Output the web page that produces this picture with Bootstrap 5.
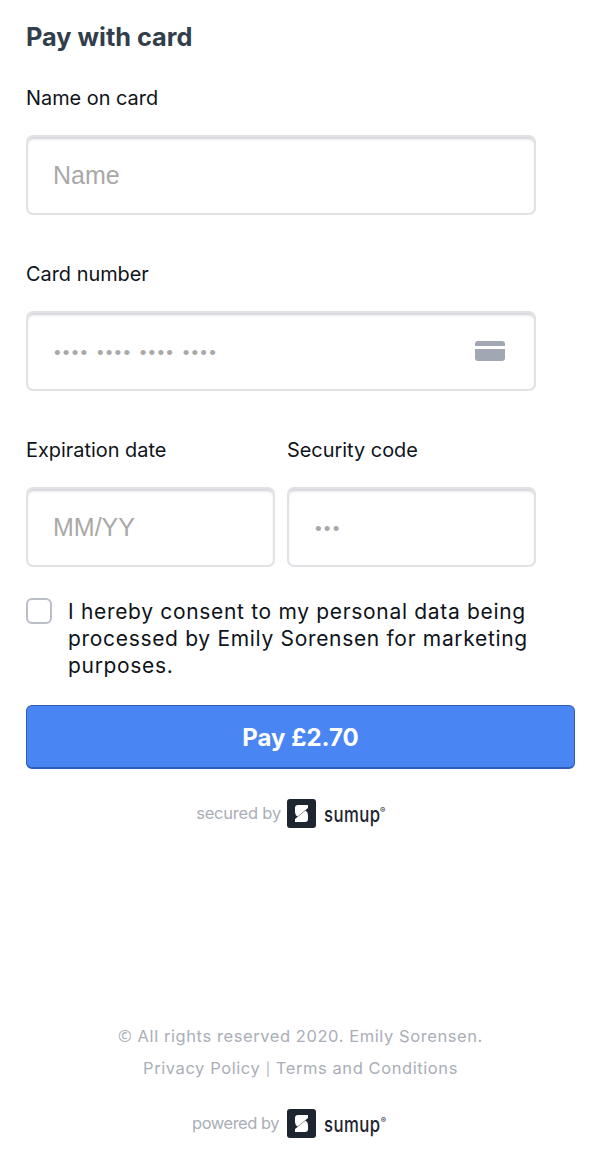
<!DOCTYPE html>
<html lang="en">
<head>
<meta charset="utf-8">
<title>Pay with card</title>
<link href="https://cdn.jsdelivr.net/npm/bootstrap@5.3.0/dist/css/bootstrap.min.css" rel="stylesheet">
<style>
html,body{height:100%}
body{font-family:"Inter","Liberation Sans",sans-serif;color:#0f131a;background:#fff}
.pay-page{height:1150px;padding:21px 25px 0 26px;display:flex;flex-direction:column}
.pay-title{font-size:25.3px;font-weight:700;color:#323e4b;line-height:32px;margin:0 0 32px}
.pay-fields{width:510px}
.field-block{margin-bottom:46px}
.field-block:last-child{margin-bottom:31px}
.field-block .form-label{font-size:19.9px;line-height:26px;margin:0 0 24px;display:block;color:#0f131a}
.field-input-wrap{position:relative}
.pay-input.form-control{height:80px;font-family:"Liberation Sans",sans-serif;font-size:25px;padding:1px 25px 0;border:2px solid #e0e2e6;border-radius:7px;color:#333;box-shadow:inset 0 3px 3px -1px #d0d1d4}
.pay-input.form-control.dots{padding:0 26px 2px}
.pay-input::placeholder{color:#a9a9a9;opacity:1}
.pay-input.dots::placeholder{font-size:19px;letter-spacing:2.2px;color:#a9a9a9}
.card-glyph{position:absolute;right:31px;top:30px;width:30px;height:20px}
.split-gap{--bs-gutter-x:12px}
.consent{display:flex;gap:16px;margin:0 0 26px;padding:0}
.consent .form-check-input{width:26px;height:26px;margin:0;flex:none;border:2px solid #b9bec7;border-radius:6px}
.consent label{font-size:21px;line-height:27px;letter-spacing:.68px;color:#0f131a;width:480px}
.pay-btn.btn{width:549px;height:64px;background:#4a85f4;border:1px solid #2d5db4;border-bottom-width:2px;border-radius:6px;color:#fff;font-size:24px;font-weight:700;padding:2px 0 0}
.brand-line{display:flex;align-items:center;justify-content:flex-end;color:#a9aeb7;font-size:16.5px;letter-spacing:-.2px;line-height:29px;padding-right:188px}
.brand-line .chip{width:29px;height:29px;margin-left:6px;flex:none}
.brand-line.powered .chip{margin-left:8px}
.brand-line .wordmark{font-weight:500;color:#1d2530;font-size:22px;letter-spacing:.6px;margin-left:8px;line-height:1;width:56px;white-space:nowrap;display:inline-block;transform:scaleX(.76);transform-origin:left center}
.brand-line .reg{font-size:8px;color:#1d2530;line-height:1;width:7px;align-self:flex-start;margin-top:7px;letter-spacing:0}
.secured{margin-top:30px}
.foot{margin-top:auto;text-align:center;color:#a9aeb7;font-size:16.5px;letter-spacing:.58px;line-height:32px;padding-bottom:12px}
.foot a{color:inherit;text-decoration:none}
.foot p{margin:0}
.copy-mark{font-family:"Noto Sans",sans-serif}
.pipe-mark{font-size:13px}
.powered{margin-top:24px;letter-spacing:-.5px;padding-right:188px}
</style>
</head>
<body>
<main class="pay-page">
  <h1 class="pay-title">Pay with card</h1>
  <form class="pay-fields">
    <div class="field-block">
      <label class="form-label" for="nm">Name on card</label>
      <input id="nm" class="form-control pay-input" placeholder="Name">
    </div>
    <div class="field-block">
      <label class="form-label" for="cn">Card number</label>
      <div class="field-input-wrap">
        <input id="cn" class="form-control pay-input dots" placeholder="•••• •••• •••• ••••">
        <svg class="card-glyph" viewBox="0 0 30 20" aria-hidden="true"><path fill="#a1a8b3" d="M3 0h24a3 3 0 0 1 3 3v2H0V3a3 3 0 0 1 3-3zM0 8h30v9a3 3 0 0 1-3 3H3a3 3 0 0 1-3-3z"/></svg>
      </div>
    </div>
    <div class="row split-gap field-block">
      <div class="col-6">
        <label class="form-label" for="ex">Expiration date</label>
        <input id="ex" class="form-control pay-input" placeholder="MM/YY">
      </div>
      <div class="col-6">
        <label class="form-label" for="cv">Security code</label>
        <input id="cv" class="form-control pay-input dots" placeholder="•••">
      </div>
    </div>
  </form>
  <div class="consent form-check">
    <input class="form-check-input" type="checkbox" id="ok">
    <label class="form-check-label" for="ok">I hereby consent to my personal data being processed by Emily Sorensen for marketing purposes.</label>
  </div>
  <button type="button" class="btn btn-primary pay-btn">Pay £2.70</button>
  <div class="brand-line secured">
    <span>secured by</span>
    <svg class="chip" viewBox="0 0 29 29" aria-hidden="true"><rect width="29" height="29" rx="3" fill="#1d2530"/><path fill="#fff" d="M11 6H21V9L10.5 17.5Q8 16 8 13V9Q8 6 11 6ZM18 23H8V20L18.5 11.5Q21 13 21 16V20Q21 23 18 23Z"/></svg>
    <span class="wordmark">sumup</span>
    <span class="reg">®</span>
  </div>
  <footer class="foot">
    <p><span class="copy-mark">©</span> All rights reserved 2020. Emily Sorensen.</p>
    <p><a href="#">Privacy Policy</a> <span class="pipe-mark">|</span> <a href="#">Terms and Conditions</a></p>
    <div class="brand-line powered">
      <span>powered by</span>
      <svg class="chip" viewBox="0 0 29 29" aria-hidden="true"><rect width="29" height="29" rx="3" fill="#1d2530"/><path fill="#fff" d="M11 6H21V9L10.5 17.5Q8 16 8 13V9Q8 6 11 6ZM18 23H8V20L18.5 11.5Q21 13 21 16V20Q21 23 18 23Z"/></svg>
      <span class="wordmark">sumup</span>
      <span class="reg">®</span>
    </div>
  </footer>
</main>
<script src="https://cdn.jsdelivr.net/npm/bootstrap@5.3.0/dist/js/bootstrap.bundle.min.js"></script>
</body>
</html>
